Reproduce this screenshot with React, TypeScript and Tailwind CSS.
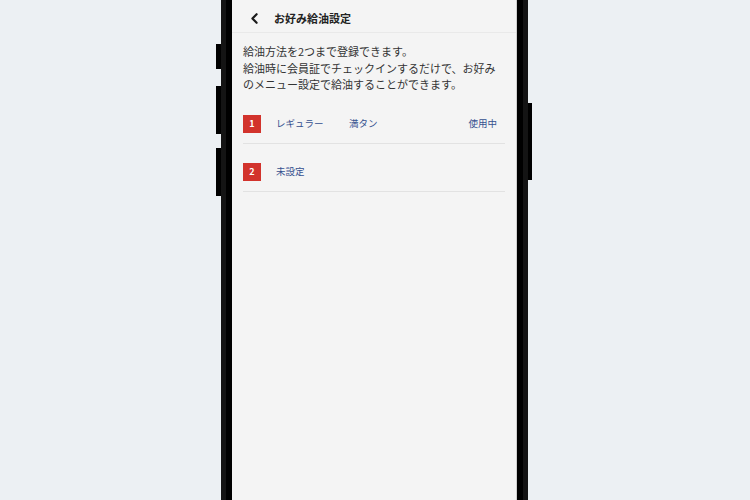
import { ChevronLeft } from 'lucide-react';

interface Preset {
  no: number;
  name: string;
  amount?: string;
  active?: boolean;
}

const presets: Preset[] = [
  { no: 1, name: 'レギュラー', amount: '満タン', active: true },
  { no: 2, name: '未設定' },
];

const PresetRow = ({ preset }: { preset: Preset }) => (
  <div className="flex items-center pt-[19px] pb-[10px] pr-[8px] border-b border-[#e2e2e2]">
    <span className="w-[18px] h-[18px] bg-[#d2332c] text-white text-[9px] font-bold flex items-center justify-center">
      {preset.no}
    </span>
    <span className="ml-[15px] w-[73px] text-[9.5px] text-[#34508f]">{preset.name}</span>
    {preset.amount && <span className="text-[9.5px] text-[#34508f]">{preset.amount}</span>}
    {preset.active && <span className="ml-auto text-[9.5px] text-[#34508f]">使用中</span>}
  </div>
);

export default function App() {
  return (
    <div
      className="w-[750px] h-[500px] overflow-hidden bg-[#ecf0f3] flex justify-center"
      style={{ fontFamily: '"Noto Sans CJK JP", "Noto Sans", sans-serif' }}
    >
      {/* phone body, top and bottom run past the viewport */}
      <div className="relative h-[500px] w-[307px] border-x-[5px] border-[#141414] ml-[-1px]">
        {/* side buttons */}
        <span className="absolute left-[-10px] top-[44px] w-[5px] h-[25px] bg-black" />
        <span className="absolute left-[-10px] top-[86px] w-[5px] h-[48px] bg-black" />
        <span className="absolute left-[-10px] top-[148px] w-[5px] h-[48px] bg-black" />
        <span className="absolute right-[-9px] top-[103px] w-[4px] h-[77px] bg-black" />

        <div className="h-full border-x-[6px] border-black">
          <div className="h-full bg-[#f4f4f4] border-r border-[#cfcfcf] flex flex-col">
            <header className="h-[33px] flex items-center pt-[4px] border-b border-[#e9e9e9]">
              <ChevronLeft className="ml-[14px] w-[17px] h-[17px] text-[#1a1a1a]" strokeWidth={3} />
              <h1 className="ml-[11px] text-[11px] font-bold text-[#222]">お好み給油設定</h1>
            </header>

            <div className="px-[11px] pt-[10px]">
              <p className="text-[11px] leading-[16.5px] text-[#333]">
                給油方法を2つまで登録できます。
                <br />
                給油時に会員証でチェックインするだけで、お好み
                <br />
                のメニュー設定で給油することができます。
              </p>

              <div className="mt-[3px]">
                {presets.map((p) => (
                  <PresetRow key={p.no} preset={p} />
                ))}
              </div>
            </div>
          </div>
        </div>
      </div>
    </div>
  );
}
